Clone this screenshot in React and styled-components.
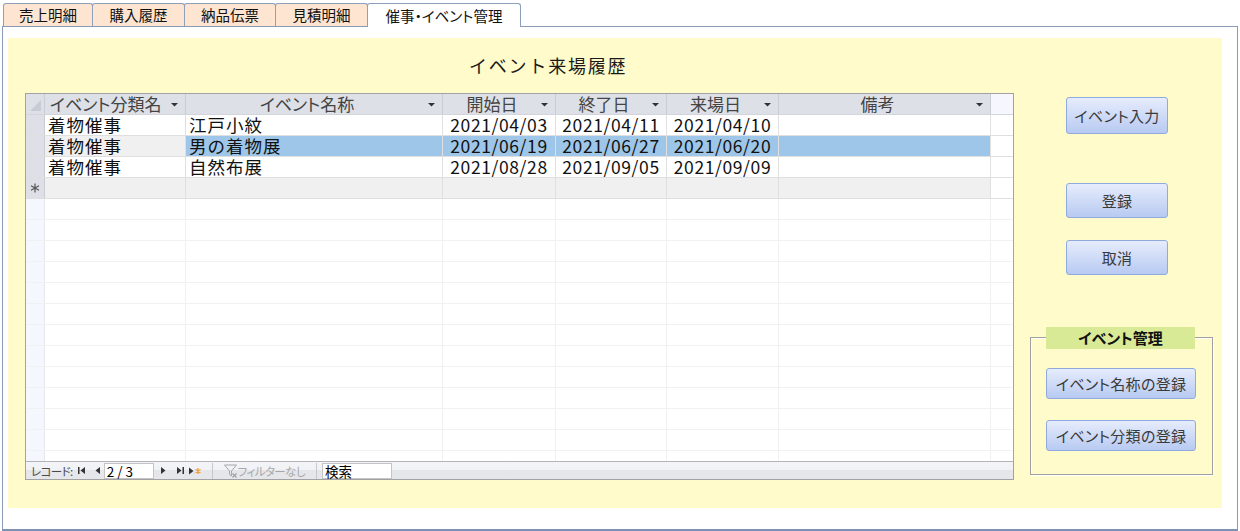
import React from "react";
import styled, { createGlobalStyle } from "styled-components";

const GlobalStyle = createGlobalStyle`
  html, body { margin: 0; padding: 0; background: #fff; }
  body { font-family: "Noto Sans CJK JP", "Noto Sans", sans-serif; color: #000; }
  * { box-sizing: border-box; }
`;

const COLS = "19px 141px 257px 113px 111px 112px 212px 1fr";

const Page = styled.div`
  width: 1240px;
  height: 531px;
  display: flex;
  flex-direction: column;
  overflow: hidden;
  background: #fff;
`;

const TabStrip = styled.div`
  display: flex;
  align-items: flex-end;
  height: 26px;
  padding-left: 3px;
  position: relative;
  z-index: 2;
`;

const Tab = styled.div`
  width: ${(p) => p.$w}px;
  height: ${(p) => (p.$active ? 24 : 23)}px;
  margin-bottom: ${(p) => (p.$active ? -1 : 0)}px;
  margin-left: ${(p) => (p.$first ? 0 : -1)}px;
  border: 1px solid #8e9fbb;
  border-bottom: none;
  border-radius: 3px 3px 0 0;
  background: ${(p) => (p.$active ? "#fff" : "#fde5d2")};
  display: flex;
  align-items: center;
  justify-content: center;
  font-size: 14.5px;
  font-feature-settings: "palt";
  color: #111;
  padding-bottom: 1px;
  position: relative;
  z-index: ${(p) => (p.$active ? 2 : 1)};
`;

const Panel = styled.div`
  margin-left: 2px;
  width: 1236px;
  height: 505px;
  border: 1px solid #8a9bb8;
  border-bottom: 2px solid #7d93b6;
  padding: 11px 0 0 5px;
`;

const Canvas = styled.div`
  width: 1214px;
  height: 470px;
  background: #fffbca;
  display: flex;
  padding-left: 17px;
`;

const LeftCol = styled.div`
  width: 989px;
  display: flex;
  flex-direction: column;
`;

const Title = styled.div`
  margin-top: 16px;
  height: 22px;
  line-height: 22px;
  padding-left: 444px;
  font-size: 18px;
  letter-spacing: 1.8px;
  color: #1a1a1a;
  font-weight: 400;
`;

const Sheet = styled.div`
  margin-top: 17px;
  height: 387px;
  border: 1px solid #a2a2a2;
  background: #fff;
  display: flex;
  flex-direction: column;
  overflow: hidden;
`;

const HeaderRow = styled.div`
  display: grid;
  grid-template-columns: ${COLS};
  height: 21px;
  flex: none;
  background: #dde0e6;
  border-bottom: 1px solid #d2d5db;
`;

const HeadCell = styled.div`
  display: grid;
  grid-template-columns: 1fr 14px;
  align-items: center;
  border-right: 1px solid #c9ccd3;
  font-size: 17px;
  font-feature-settings: "palt";
  color: #444;
  line-height: 20px;
  white-space: nowrap;
  & > span {
    text-align: ${(p) => (p.$left ? "left" : "center")};
    padding-left: ${(p) => (p.$left ? 5 : 0)}px;
  }
`;

const CornerCell = styled.div`
  border-right: 1px solid #c9ccd3;
  display: flex;
  align-items: flex-end;
  justify-content: flex-end;
  padding: 0 3px 3px 0;
`;

const FillerHead = styled.div`
  background: #f5f6fe;
`;

const Body = styled.div`
  flex: 1;
  overflow: hidden;
  background: #fff;
`;

const Row = styled.div`
  display: grid;
  grid-template-columns: ${COLS};
  height: 21px;
  border-bottom: 1px solid ${(p) => (p.$empty ? "#f1f1f1" : "#dfdfdf")};
`;

const Selector = styled.div`
  background: ${(p) => (p.$empty ? "#f5f7fe" : "#dde0e6")};
  border-right: 1px solid ${(p) => (p.$empty ? "#e6e8ee" : "#c9ccd3")};
  display: flex;
  align-items: center;
  justify-content: center;
`;

const Cell = styled.div`
  background: ${(p) =>
    p.$tone === "sel" ? "#9dc6e8" : p.$tone === "cur" ? "#f0f0f0" : "#fff"};
  border-right: 1px solid ${(p) => (p.$empty ? "#f0f0f0" : "#e0e0e0")};
  font-size: 17.5px;
  line-height: 20px;
  white-space: nowrap;
  padding-left: ${(p) => (p.$date ? 0 : 3)}px;
  text-align: ${(p) => (p.$date ? "center" : "left")};
  letter-spacing: ${(p) => (p.$date ? 0.6 : 1)}px;
  color: #111;
`;

const Filler = styled.div`
  background: #fff;
`;

const NavBar = styled.div`
  height: 18px;
  flex: none;
  border-top: 1px solid #b3b3b8;
  background: linear-gradient(#f3f4f7 0%, #f1f2f5 45%, #e5e6ea 50%, #e6e7eb 100%);
  display: flex;
  align-items: center;
  font-size: 12px;
  color: #555;
  padding-left: 5px;
`;

const NavLabel = styled.span`
  font-feature-settings: "palt";
  font-size: 11.5px;
  letter-spacing: -0.6px;
  color: #4a4a4a;
`;

const NavBtn = styled.span`
  display: inline-flex;
  align-items: center;
  justify-content: center;
  width: ${(p) => p.$w || 10}px;
  margin-left: ${(p) => p.$ml || 0}px;
  height: 14px;
`;

const NavInput = styled.div`
  height: 16px;
  background: #fff;
  border: 1px solid #c4c4c4;
  font-size: 13.5px;
  line-height: 14px;
  color: #000;
  padding-left: 2px;
  margin-left: ${(p) => p.$ml || 0}px;
  width: ${(p) => p.$w}px;
`;

const NavSep = styled.span`
  width: 1px;
  height: 16px;
  background: #c8c8cc;
  margin-left: ${(p) => p.$ml}px;
`;

const FilterText = styled.span`
  color: #a8a8a8;
  font-feature-settings: "palt";
  font-size: 11.5px;
  letter-spacing: -0.6px;
`;

const RightCol = styled.div`
  width: 183px;
  margin-left: 16px;
  display: flex;
  flex-direction: column;
`;

const Button = styled.div`
  width: ${(p) => p.$w}px;
  height: ${(p) => p.$h}px;
  margin-top: ${(p) => p.$mt}px;
  margin-left: ${(p) => p.$ml || 0}px;
  flex: none;
  border: 1px solid #8eaadf;
  border-radius: 3px;
  background: linear-gradient(#e6ecfc, #b8caf2);
  display: flex;
  align-items: center;
  justify-content: center;
  font-size: 15px;
  font-feature-settings: "palt";
  color: #3a3a3a;
  letter-spacing: 0.3px;
`;

const GroupBox = styled.div`
  margin-top: 62px;
  width: 183px;
  height: 138px;
  border: 1px solid #a0a0a0;
  box-shadow: 1px 1px 0 #fff, inset 1px 1px 0 #fff;
  display: flex;
  flex-direction: column;
  padding-left: 15px;
`;

const GroupLabel = styled.div`
  margin-top: -11px;
  width: 149px;
  height: 22px;
  line-height: 22px;
  flex: none;
  background: #d8ea96;
  text-align: center;
  font-size: 15px;
  font-weight: 700;
  font-feature-settings: "palt";
  color: #111;
`;

const Arrow = () => (
  <svg width="7" height="5" viewBox="0 0 7 5">
    <path d="M0 1 H7 L3.5 4.5 Z" fill="#333" />
  </svg>
);

const Corner = () => (
  <svg width="11" height="11" viewBox="0 0 11 11">
    <path d="M11 0 V11 H0 Z" fill="#c7cbd3" />
  </svg>
);

const Star = () => (
  <svg width="10" height="10" viewBox="0 0 10 10" stroke="#555" strokeWidth="1.2">
    <path d="M5 0.5 V9.5 M1 2.8 L9 7.2 M1 7.2 L9 2.8" />
  </svg>
);

const NavIcon = ({ kind }) => {
  const c = "#333";
  if (kind === "first")
    return (
      <svg width="7" height="7" viewBox="0 0 7 7">
        <rect x="0" y="0" width="1.5" height="7" fill={c} />
        <path d="M7 0 V7 L2.5 3.5 Z" fill={c} />
      </svg>
    );
  if (kind === "prev")
    return (
      <svg width="5" height="7" viewBox="0 0 5 7">
        <path d="M5 0 V7 L0.5 3.5 Z" fill={c} />
      </svg>
    );
  if (kind === "next")
    return (
      <svg width="5" height="7" viewBox="0 0 5 7">
        <path d="M0 0 V7 L4.5 3.5 Z" fill={c} />
      </svg>
    );
  if (kind === "last")
    return (
      <svg width="7" height="7" viewBox="0 0 7 7">
        <path d="M0 0 V7 L4.5 3.5 Z" fill={c} />
        <rect x="5.5" y="0" width="1.5" height="7" fill={c} />
      </svg>
    );
  return (
    <svg width="13" height="8" viewBox="0 0 13 8">
      <path d="M0 0.5 V7.5 L4.5 4 Z" fill={c} />
      <path d="M9 1 V7 M6.4 2.5 L11.6 5.5 M6.4 5.5 L11.6 2.5" stroke="#f0a040" strokeWidth="1.3" />
    </svg>
  );
};

const Funnel = () => (
  <svg width="14" height="14" viewBox="0 0 14 14">
    <path d="M0.5 1 H12.5 L7.5 7 V12 L5.5 10.5 V7 Z" fill="none" stroke="#a8a8a8" strokeWidth="1" />
    <path d="M8.5 9.5 L12.5 13.5 M12.5 9.5 L8.5 13.5" stroke="#a0a0a0" strokeWidth="1.2" />
  </svg>
);

const headers = [
  { label: "イベント分類名", left: true },
  { label: "イベント名称" },
  { label: "開始日" },
  { label: "終了日" },
  { label: "来場日" },
  { label: "備考" },
];

const rows = [
  ["着物催事", "江戸小紋", "2021/04/03", "2021/04/11", "2021/04/10", ""],
  ["着物催事", "男の着物展", "2021/06/19", "2021/06/27", "2021/06/20", ""],
  ["着物催事", "自然布展", "2021/08/28", "2021/09/05", "2021/09/09", ""],
];

const tabs = [
  { label: "売上明細", w: 90 },
  { label: "購入履歴", w: 93 },
  { label: "納品伝票", w: 92 },
  { label: "見積明細", w: 93 },
  { label: "催事・イベント管理", w: 154, active: true },
];

export default function App() {
  return (
    <Page>
      <GlobalStyle />
      <TabStrip>
        {tabs.map((t, i) => (
          <Tab key={t.label} $w={t.w} $first={i === 0} $active={t.active}>
            {t.label}
          </Tab>
        ))}
      </TabStrip>
      <Panel>
        <Canvas>
          <LeftCol>
            <Title>イベント来場履歴</Title>
            <Sheet>
              <HeaderRow>
                <CornerCell>
                  <Corner />
                </CornerCell>
                {headers.map((h) => (
                  <HeadCell key={h.label} $left={h.left}>
                    <span>{h.label}</span>
                    <Arrow />
                  </HeadCell>
                ))}
                <FillerHead />
              </HeaderRow>
              <Body>
                {rows.map((r, ri) => (
                  <Row key={ri}>
                    <Selector />
                    {r.map((v, ci) => (
                      <Cell
                        key={ci}
                        $date={ci >= 2 && ci <= 4}
                        $tone={ri === 1 ? (ci === 0 ? "cur" : "sel") : undefined}
                      >
                        {v}
                      </Cell>
                    ))}
                    <Filler />
                  </Row>
                ))}
                <Row>
                  <Selector>
                    <Star />
                  </Selector>
                  {[0, 1, 2, 3, 4, 5].map((c) => (
                    <Cell key={c} $tone="cur" />
                  ))}
                  <Filler />
                </Row>
                {Array.from({ length: 14 }).map((_, i) => (
                  <Row key={"e" + i} $empty>
                    <Selector $empty />
                    {[0, 1, 2, 3, 4, 5].map((c) => (
                      <Cell key={c} $empty />
                    ))}
                    <Filler />
                  </Row>
                ))}
              </Body>
              <NavBar>
                <NavLabel>レコード:</NavLabel>
                <NavBtn $w={10} $ml={4}>
                  <NavIcon kind="first" />
                </NavBtn>
                <NavBtn $w={10} $ml={6}>
                  <NavIcon kind="prev" />
                </NavBtn>
                <NavInput $w={50} $ml={1}>2 / 3</NavInput>
                <NavBtn $w={10} $ml={5}>
                  <NavIcon kind="next" />
                </NavBtn>
                <NavBtn $w={10} $ml={7}>
                  <NavIcon kind="last" />
                </NavBtn>
                <NavBtn $w={14} $ml={3}>
                  <NavIcon kind="new" />
                </NavBtn>
                <NavSep $ml={9} />
                <NavBtn $w={14} $ml={11}>
                  <Funnel />
                </NavBtn>
                <FilterText>フィルターなし</FilterText>
                <NavSep $ml={11} />
                <NavInput $w={70} $ml={5}>
                  検索
                </NavInput>
              </NavBar>
            </Sheet>
          </LeftCol>
          <RightCol>
            <Button $w={102} $h={37} $mt={59} $ml={36}>
              イベント入力
            </Button>
            <Button $w={102} $h={35} $mt={49} $ml={36}>
              登録
            </Button>
            <Button $w={102} $h={35} $mt={22} $ml={36}>
              取消
            </Button>
            <GroupBox>
              <GroupLabel>イベント管理</GroupLabel>
              <Button $w={150} $h={31} $mt={19}>
                イベント名称の登録
              </Button>
              <Button $w={150} $h={31} $mt={21}>
                イベント分類の登録
              </Button>
            </GroupBox>
          </RightCol>
        </Canvas>
      </Panel>
    </Page>
  );
}
